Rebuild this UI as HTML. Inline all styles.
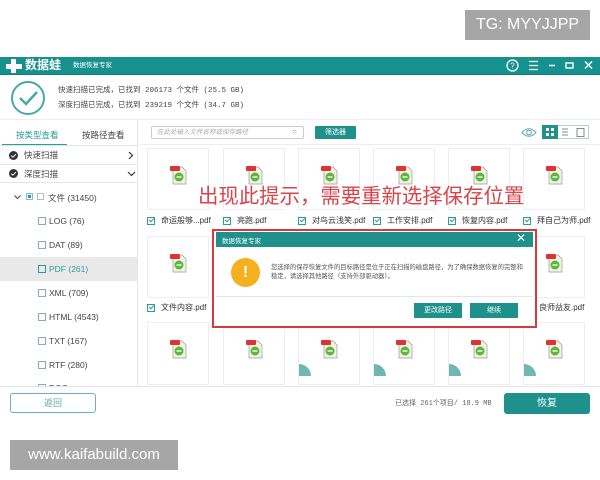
<!DOCTYPE html>
<html><head><meta charset="utf-8">
<style>
*{margin:0;padding:0;box-sizing:border-box}
body{width:600px;height:480px;position:relative;background:#fff;font-family:"Liberation Sans","Noto Sans CJK SC",sans-serif;overflow:hidden;color:#333}
.a{position:absolute}
.card{position:absolute;width:62px;height:62px;border:1px solid #eee;background:#fff}
.card .ic{position:absolute;left:22px;top:16px}
.lbl{position:absolute;font-size:8px;color:#333;white-space:nowrap}
.cb{display:inline-block;width:8px;height:8px;border:1px solid #2a9d98;vertical-align:middle;margin-right:6px;position:relative}
.cb.on::after{content:"";position:absolute;left:1px;top:0px;width:4px;height:2px;border-left:1px solid #2a9d98;border-bottom:1px solid #2a9d98;transform:rotate(-45deg)}
.side{position:absolute;left:38px;font-size:8.5px;color:#444}
.sq{display:inline-block;width:8px;height:8px;border:1px solid #8ab;vertical-align:-1px;margin-right:3px}
</style></head><body>
<div class="a" style="left:465px;top:10px;width:125px;height:30px;background:#a6a6a6;color:#fff;font-size:16px;line-height:30px;text-align:center">TG: MYYJJPP</div>

<div class="a" style="left:0;top:57px;width:600px;height:18px;background:#17918d"></div>
<div class="a" style="left:0;top:74px;width:600px;height:1px;background:#0f7f7b"></div>
<svg class="a" style="left:5px;top:58px" width="18" height="16"><path d="M6 1h5v5h6v5h-6v4H6v-4H1V6h5z" fill="#fff"/></svg>
<div class="a" style="left:25px;top:58px;color:#fff;font-size:12px;font-weight:bold;line-height:15px">数据蛙</div>
<div class="a" style="left:73px;top:61px;color:#fff;font-size:6.5px;line-height:10px">数据恢复专家</div>
<svg class="a" style="left:505px;top:58px" width="95" height="16">
<circle cx="7.5" cy="7.5" r="5.5" fill="none" stroke="#fff" stroke-width="1.3"/><text x="5.3" y="10.5" fill="#fff" font-size="8" font-family="Liberation Sans">?</text>
<path d="M24 3.5h9M24 7.5h9M24 11.5h9" stroke="#fff" stroke-width="1.3"/>
<path d="M44 7.5h6" stroke="#fff" stroke-width="1.5"/>
<rect x="61" y="5" width="7" height="5" fill="none" stroke="#fff" stroke-width="1.4"/>
<path d="M80 3.5l7 7M87 3.5l-7 7" stroke="#fff" stroke-width="1.5"/>
</svg>

<svg class="a" style="left:10px;top:80px" width="36" height="36"><circle cx="18" cy="18" r="16" fill="none" stroke="#45aaa4" stroke-width="2"/><path d="M10 18l6 6 11-12" fill="none" stroke="#45aaa4" stroke-width="2.5"/></svg>
<div class="a" style="left:58px;top:84px;font-size:7.5px;color:#444;font-family:'Liberation Mono','Noto Sans CJK SC',monospace">快速扫描已完成，已找到 206173 个文件 (25.5 GB)</div>
<div class="a" style="left:58px;top:99px;font-size:7.5px;color:#444;font-family:'Liberation Mono','Noto Sans CJK SC',monospace">深度扫描已完成，已找到 239219 个文件 (34.7 GB)</div>
<div class="a" style="left:0;top:119px;width:600px;height:1px;background:#eee"></div>

<!-- sidebar -->
<div class="a" style="left:137px;top:120px;width:1px;height:266px;background:#e6e6e6"></div>
<div class="a" style="left:16px;top:129px;font-size:8.5px;color:#2a9d98">按类型查看</div>
<div class="a" style="left:82px;top:129px;font-size:8.5px;color:#444">按路径查看</div>
<div class="a" style="left:2px;top:144px;width:65px;height:1.5px;background:#2a9d98"></div>
<div class="a" style="left:0;top:145px;width:137px;height:1px;background:#e6e6e6"></div>
<svg class="a" style="left:9px;top:151px" width="9" height="9"><circle cx="4.5" cy="4.5" r="4.5" fill="#333"/><path d="M2.3 4.6l1.6 1.6 3-3" stroke="#fff" fill="none" stroke-width="1"/></svg>
<div class="a" style="left:24px;top:149px;font-size:8.5px;color:#444">快速扫描</div>
<svg class="a" style="left:128px;top:151px" width="6" height="9"><path d="M1 1l3.5 3.5L1 8" stroke="#333" fill="none" stroke-width="1.2"/></svg>
<div class="a" style="left:0;top:164px;width:137px;height:1px;background:#e6e6e6"></div>
<svg class="a" style="left:9px;top:169px" width="9" height="9"><circle cx="4.5" cy="4.5" r="4.5" fill="#333"/><path d="M2.3 4.6l1.6 1.6 3-3" stroke="#fff" fill="none" stroke-width="1"/></svg>
<div class="a" style="left:24px;top:168px;font-size:8.5px;color:#444">深度扫描</div>
<svg class="a" style="left:127px;top:171px" width="9" height="6"><path d="M1 1l3.5 3.5L8 1" stroke="#333" fill="none" stroke-width="1.2"/></svg>
<div class="a" style="left:0;top:182px;width:137px;height:1px;background:#e6e6e6"></div>
<svg class="a" style="left:14px;top:195px" width="7" height="5"><path d="M0.5 0.5l3 3 3-3" stroke="#444" fill="none"/></svg>
<div class="a" style="left:26px;top:193px;width:7px;height:7px;border:1px solid #8bc;background:#fff"><div style="margin:1px;width:3px;height:3px;background:#2a9d98"></div></div>
<div class="a" style="left:37px;top:193px;width:7px;height:7px;border:1px solid #bbb"></div>
<div class="a" style="left:48px;top:192px;font-size:8.5px;color:#444">文件 (31450)</div>
<div class="a" style="left:0;top:257px;width:137px;height:24px;background:#e9e9e9"></div>
<div class="side" style="top:216px"><span class="sq"></span>LOG (76)</div>
<div class="side" style="top:240px"><span class="sq"></span>DAT (89)</div>
<div class="side" style="top:264px;color:#2a9d98"><span class="sq" style="border-color:#2a9d98"></span>PDF (261)</div>
<div class="side" style="top:288px"><span class="sq"></span>XML (709)</div>
<div class="side" style="top:312px"><span class="sq"></span>HTML (4543)</div>
<div class="side" style="top:336px"><span class="sq"></span>TXT (167)</div>
<div class="side" style="top:360px"><span class="sq"></span>RTF (280)</div>
<div class="side" style="top:383px;height:3px;overflow:hidden"><span class="sq"></span>DOC</div>

<!-- toolbar -->
<div class="a" style="left:151px;top:126px;width:153px;height:13px;border:1px solid #ccc;border-radius:2px;font-size:6.5px;color:#aaa;padding-left:5px;line-height:11px;font-style:italic">在此处输入文件名称或保存路径</div>
<div class="a" style="left:292px;top:127px;font-size:8px;color:#888">○</div>
<div class="a" style="left:315px;top:126px;width:41px;height:13px;background:#1f918c;color:#fff;font-size:7px;text-align:center;line-height:13px;border-radius:1px">筛选器</div>
<svg class="a" style="left:521px;top:127px" width="16" height="11"><path d="M1 5.5Q8 -2 15 5.5Q8 13 1 5.5z" fill="none" stroke="#5aaba6" stroke-width="1"/><circle cx="8" cy="5.5" r="2.3" fill="none" stroke="#5aaba6"/></svg>
<div class="a" style="left:542px;top:125px;width:47px;height:14px;border:1px solid #bcd"></div>
<div class="a" style="left:542px;top:125px;width:16px;height:14px;background:#1f918c"></div>
<svg class="a" style="left:546px;top:128px" width="40" height="9"><rect x="0" y="0" width="3" height="3" fill="#fff"/><rect x="5" y="0" width="3" height="3" fill="#fff"/><rect x="0" y="5" width="3" height="3" fill="#fff"/><rect x="5" y="5" width="3" height="3" fill="#fff"/><path d="M16 1h6M16 4h6M16 7h6" stroke="#888"/><rect x="31" y="0.5" width="7" height="8" fill="none" stroke="#888"/></svg>
<div class="a" style="left:138px;top:144px;width:462px;height:1px;background:#eee"></div>

<!-- cards -->
<div id="cards"></div>

<!-- red overlay text -->
<div class="a" style="left:198px;top:180px;font-size:20.4px;color:#d8444a;white-space:nowrap;font-family:'Noto Sans CJK SC',sans-serif;line-height:28px">出现此提示，需要重新选择保存位置</div>

<!-- dialog -->
<div class="a" style="left:212px;top:229px;width:325px;height:99px;border:2px solid #d63a3f;background:#fff"></div>
<div class="a" style="left:216px;top:232px;width:317px;height:15px;background:#1f918c"></div>
<div class="a" style="left:222px;top:235px;font-size:6.5px;color:#fff">数据恢复专家</div>
<div class="a" style="left:516px;top:231px;font-size:12px;color:#fff">✕</div>
<div class="a" style="left:231px;top:258px;width:29px;height:29px;border-radius:50%;background:#f4b01f;color:#fff;font-size:16px;font-weight:bold;text-align:center;line-height:29px">!</div>
<div class="a" style="left:271px;top:263px;width:255px;font-size:6.3px;color:#555;line-height:9px">您选择的保存恢复文件的目标路径是位于正在扫描的磁盘路径，为了确保数据恢复的完整和稳定，请选择其他路径（支持外部驱动器）。</div>
<div class="a" style="left:216px;top:296px;width:317px;height:1px;background:#e6e6e6"></div>
<div class="a" style="left:414px;top:303px;width:48px;height:15px;background:#1f918c;color:#fff;font-size:7px;text-align:center;line-height:15px">更改路径</div>
<div class="a" style="left:470px;top:303px;width:48px;height:15px;background:#1f918c;color:#fff;font-size:7px;text-align:center;line-height:15px">继续</div>

<!-- bottom -->
<div class="a" style="left:0;top:386px;width:600px;height:1px;background:#e6e6e6"></div>
<div class="a" style="left:10px;top:393px;width:86px;height:20px;border:1px solid #6db3ae;border-radius:3px;color:#5aa8a3;font-size:9px;text-align:center;line-height:18px">返回</div>
<div class="a" style="left:395px;top:398px;font-size:7px;color:#666;font-family:'Liberation Mono','Noto Sans CJK SC',monospace">已选择 261个项目/ 18.9 MB</div>
<div class="a" style="left:504px;top:393px;width:86px;height:21px;background:#1f918c;border-radius:3px;color:#fff;font-size:10px;text-align:center;line-height:21px">恢复</div>

<div class="a" style="left:10px;top:440px;width:168px;height:30px;background:#a6a6a6;color:#fff;font-size:15px;line-height:30px;text-align:center">www.kaifabuild.com</div>

<script>
var xs=[147,223,298,373,448,523],ys=[148,236,322];
var n1=["命运般够...pdf","亮跑.pdf","对鸟云浅笑.pdf","工作安排.pdf","恢复内容.pdf","拜自己为师.pdf"];
var ic='<svg class="ic" width="18" height="20"><path d="M3 2h9l4 4v13H3z" fill="#f3f0e6" stroke="#999" stroke-width="0.7"/><rect x="0" y="1" width="10" height="5" fill="#d33" rx="1"/><circle cx="9" cy="12" r="4.5" fill="#5bb83a"/><path d="M6.5 12h5" stroke="#fff" stroke-width="1.3"/></svg>';
var h='';
for(var r=0;r<3;r++)for(var c=0;c<6;c++){
 h+='<div class="card" style="left:'+xs[c]+'px;top:'+ys[r]+'px;height:'+(r==2?63:62)+'px">'+ic+(r==2&&c>=2?'<div style="position:absolute;left:0;top:41px;width:12px;height:12px;background:#6fb7b3;border-top-right-radius:12px"></div>':'')+'</div>';
 if(r==0)h+='<div class="lbl" style="left:'+(xs[c])+'px;top:215px"><span class="cb on"></span>'+n1[c]+'</div>';
}
h+='<div class="lbl" style="left:147px;top:302px"><span class="cb on"></span>文件内容.pdf</div>';
h+='<div class="lbl" style="left:539px;top:302px">良师益友.pdf</div>';
document.getElementById('cards').innerHTML=h;
</script>
</body></html>
